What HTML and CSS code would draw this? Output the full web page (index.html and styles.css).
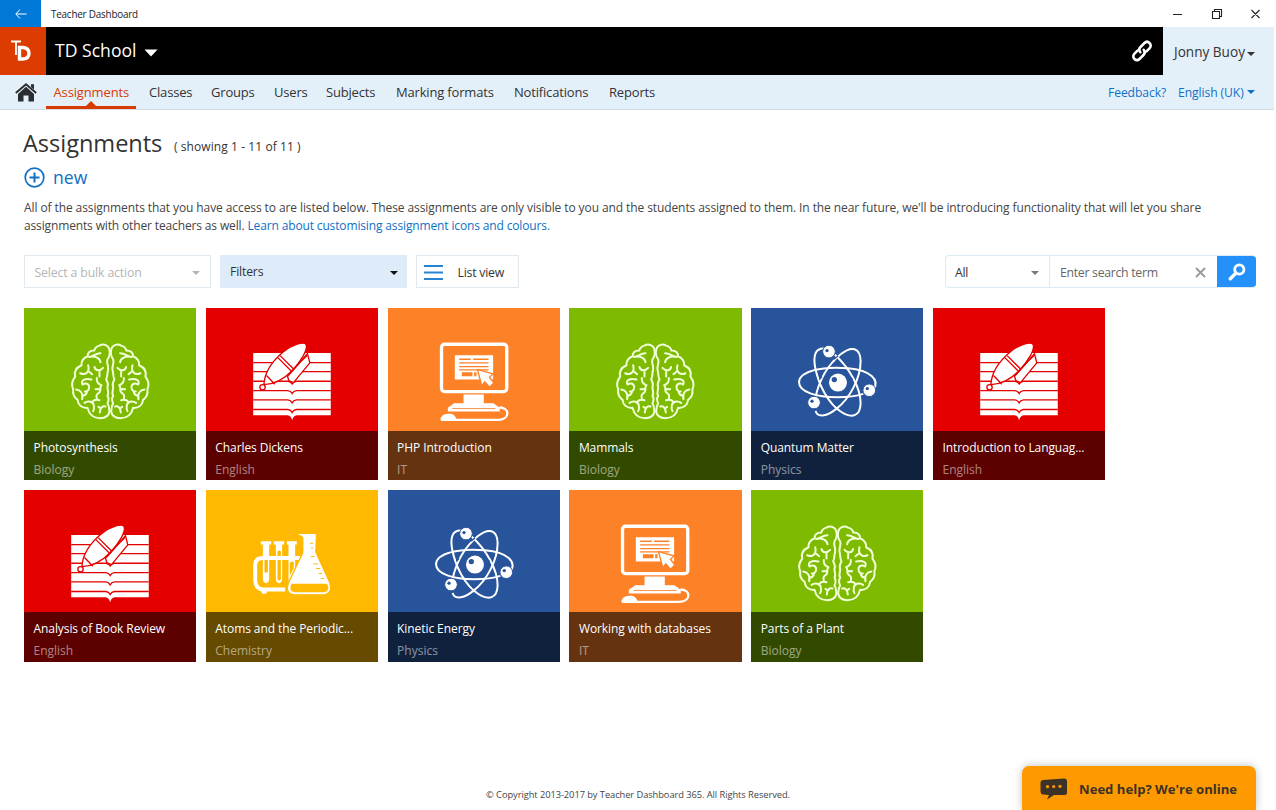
FILE: index.html
```html
<!DOCTYPE html>
<html lang="en">
<head>
<meta charset="utf-8">
<title>Teacher Dashboard</title>
<link rel="stylesheet" href="styles.css">
</head>
<body>
<svg class="defs" width="0" height="0">
  <symbol id="brain" viewBox="12 24 516 368">
    <g id="half" fill="none" stroke="#f1ffd8" stroke-width="6" stroke-linecap="round" stroke-linejoin="round">
      <path d="M268 150C266 136 250 130 238 137C228 139 224 145 222 152C208 152 201 160 203 169C190 173 182 185 184 196C168 203 161 215 165 230C156 242 153 256 159 268C157 283 163 294 172 300C174 316 186 325 202 324C207 345 222 355 240 355C256 355 266 347 268 335C266 325 268 318 262 311C266 302 268 296 262 288C268 278 261 270 262 262C266 252 262 246 258 238C264 228 260 220 264 210C266 195 258 190 262 178C268 170 270 160 268 150Z"/>
      <path d="M241 160C226 160 218 170 207 171C226 167 240 176 241 187M180 220C196 227 209 217 204 196M206 215L216 223M223 201C226 214 240 214 249 204M238 213L238 230M187 254C180 242 194 234 214 239M187 254C196 247 207 252 207 262C206 272 200 275 194 275M168 269C180 270 190 280 186 298M187 287C193 287 198 283 200 278M230 234C228 246 234 252 244 256C235 264 247 272 235 280C228 284 228 290 230 296M226 268L238 267M193 309C205 300 220 306 221 317C222 324 222 330 219 334M216 307C220 300 230 299 238 301M256 320C248 317 240 323 239 338M242 326L235 321"/>
    </g>
    <use href="#half" transform="translate(541 0) scale(-1 1)"/>
  </symbol>
  <symbol id="book" viewBox="12 23 516 368">
    <path fill="#fff" d="M153 158H386V345H284Q273 346 270 360Q267 346 256 345H153Z"/>
    <path fill="none" stroke="#e50000" stroke-width="4" d="M153 187H386M153 214H386M153 243H257Q266 244 270 251Q274 244 283 243H386M153 271H257Q266 272 270 280Q274 272 283 271H386M153 299H257Q266 300 270 308Q274 300 283 299H386M153 328H257Q266 329 270 337Q274 329 283 328H386"/>
    <g fill="#fff" stroke="#e50000" stroke-width="4" stroke-linejoin="round">
      <path d="M316 160L323 188L274 247L260 241L256 228Z"/>
      <path d="M185 253C187 220 207 185 243 155C270 132 306 122 312 133C318 148 296 184 269 212C246 236 216 252 185 253Z"/>
      <path d="M193 226L218 252M227 172L268 213M234 166L275 207" fill="none"/>
      <path d="M315 166L296 184L260 224" fill="none"/>
      <circle cx="181" cy="261" r="8"/>
    </g>
  </symbol>
  <symbol id="computer" viewBox="12 23 516 368">
    <rect x="172" y="132" width="196" height="142" rx="9" fill="none" stroke="#fff" stroke-width="10"/>
    <path fill="#fff" d="M212 165H327V238H212ZM238 283H299V313H238Z"/>
    <path stroke="#fd8127" stroke-width="4" d="M225 177H260M267 177H313M225 188H313M225 199H313M225 209H313"/>
    <path fill="#fd8127" d="M233 216H265V228H233ZM270 216H277V228H270Z"/>
    <path fill="#fff" stroke="#fd8127" stroke-width="4" d="M280 208L327 221L316 231L329 248L316 261L302 245L293 257Z"/>
    <path fill="#fff" d="M210 309H328L347 323V334H191V323ZM168 359Q171 342 190 341H200Q212 343 218 359Z"/>
    <path fill="none" stroke="#fff" stroke-width="7" d="M170 359H344C378 356 378 323 346 322"/>
    <path stroke="#fd8127" stroke-width="2.5" d="M205 325H334"/>
  </symbol>
  <symbol id="atom" viewBox="9.5 24 516 368">
    <g fill="none" stroke="#fff" stroke-width="6">
      <path d="M378 267C394 241 370 211 300 205C220 198 153 215 153 247C153 276 205 292 268 292C300 292 325 289 346 282"/>
      <path d="M229 146C200 144 195 170 202 205C212 254 239 309 278 335C311 357 337 350 338 310C338 266 306 204 258 162"/>
      <path d="M203 333C206 351 231 354 265 327C306 296 338 234 338 183C337 142 310 137 278 163C242 193 214 238 202 294"/>
    </g>
    <g stroke="#28549c" stroke-width="4" fill="none"><path d="M258 178L270 168M306 232L314 239M214 238L222 230M257 309L265 318M302 195L318 201"/></g>
    <g fill="#fff" stroke="#28549c" stroke-width="3"><circle cx="243" cy="155" r="19"/><circle cx="364" cy="271" r="19"/><circle cx="198" cy="308" r="19"/></g>
    <circle cx="270" cy="248" r="27" fill="#fff"/>
    <g fill="#28549c"><circle cx="259" cy="239" r="8"/><circle cx="237" cy="152" r="5"/><circle cx="358" cy="266" r="5"/><circle cx="192" cy="304" r="5"/></g>
  </symbol>
  <symbol id="flask" viewBox="12 14 516 368">
    <path fill="#fff" d="M176 168H207V178H201V280Q200 294 192 294Q183 294 182 280V178H176ZM215 168H246V178H240V280Q239 294 231 294Q222 294 221 280V178H215ZM254 168H284V178H279V250L259 290V178H254Z"/>
    <path fill="#ffb900" d="M187 224H197V262H187ZM226 198Q231 194 236 198V282Q231 290 226 282ZM263 232L275 228V248L263 270Z"/>
    <path fill="none" stroke="#fff" stroke-width="12" d="M296 218H180Q160 219 159 238V285Q160 311 183 313H249"/>
    <path fill="#fff" d="M176 314H196L192 326H180Z"/>
    <path fill="#fff" stroke="#ffb900" stroke-width="4" d="M285 144H343V155L341 200L383 292Q393 322 368 329H274Q249 324 258 295L302 202V158Q300 152 290 151Z"/>
    <path fill="#ffb900" d="M268 296H375Q386 317 367 321H277Q258 319 268 296Z"/>
    <path stroke="#ffb900" stroke-width="3" d="M323 174H333M327 189H333M326 214H337M334 236H347M342 250H354M350 265H360M356 280H366"/>
  </symbol>
</svg>

<header class="window-bar">
  <div class="back"><svg width="12" height="10" viewBox="0 0 12 10"><path d="M5 .5L.8 5L5 9.500M1 5H11.500" fill="none" stroke="#fff"/></svg></div>
  <span class="window-title">Teacher Dashboard</span>
  <svg class="window-controls" width="84" height="12" viewBox="0 0 84 12"><path d="M0 6.500H9M39.500 3.500H46.500V10.500H39.500ZM41.500 3V1.500H48.500V8.500H47M78.500 2L86.500 10M86.500 2L78.500 10" fill="none" stroke="#222" stroke-width="1.100"/></svg>
</header>
<div class="school-bar">
  <div class="logo"><svg width="46" height="48"><path d="M11 14.500H21M16 14V28" fill="none" stroke="#fff" stroke-width="1.800"/><path d="M19.500 20.500H23Q29 21 29 26.200Q29 31.500 23 32H19.500Z" fill="none" stroke="#fff" stroke-width="3.400"/></svg></div>
  <span class="school">TD School</span>
  <svg class="school-caret" width="14" height="8"><path d="M.5 .5H13.500L7 7.500Z" fill="#fff"/></svg>
  <svg class="link" width="22" height="22" viewBox="0 0 22 22"><g fill="none" stroke="#fff" stroke-width="2.600" stroke-linecap="round"><path d="M9.300 12.200C7.500 10 8 8.500 9.500 7L13.500 3C15 1.500 17 1.500 18.500 3C20.200 4.700 20 6.800 18.500 8.300L15.500 11.300"/><path d="M12.700 9.800C14.500 12 14 13.500 12.500 15L8.500 19C7 20.500 5 20.500 3.500 19C1.800 17.300 2 15.200 3.500 13.700L6.500 10.700"/></g></svg>
  <div class="user"><span>Jonny Buoy</span><i class="caret dark"></i></div>
</div>
<nav class="nav">
  <svg class="home" width="22" height="19" viewBox="0 0 22 19"><path d="M11 3.800L19 11V18.500H13.500V12.500H8.500V18.500H3V11Z" fill="#2b2d31"/><path d="M.8 10L11 1.300L21.200 10" fill="none" stroke="#2b2d31" stroke-width="1.900"/><path d="M16 1.300H19V6.500L16 4Z" fill="#2b2d31"/></svg>
  <a class="active">Assignments</a><a class="w-classes">Classes</a><a class="w-groups">Groups</a><a class="w-users">Users</a><a class="w-subjects">Subjects</a><a class="w-marking">Marking formats</a><a class="w-notes">Notifications</a><a>Reports</a>
  <span class="feedback">Feedback?</span><span class="language">English (UK)</span><i class="caret blue"></i>
</nav>
<main>
  <div class="heading"><h1>Assignments</h1><span>( showing 1 - 11 of 11 )</span></div>
  <div class="new"><svg width="21" height="21" viewBox="0 0 21 21"><circle cx="10.500" cy="10.500" r="9.300" fill="none" stroke="#0f70c4" stroke-width="1.700"/><path d="M10.500 5.500V15.500M5.500 10.500H15.500" stroke="#0f70c4" stroke-width="2"/></svg><span>new</span></div>
  <p class="intro"><span class="line-one">All of the assignments that you have access to are listed below. These assignments are only visible to you and the students assigned to them. In the near future, we'll be introducing functionality that will let you share</span><br><span class="line-two">assignments with other teachers as well. <a>Learn about customising assignment icons and colours.</a></span></p>
  <div class="toolbar">
    <div class="bulk"><span>Select a bulk action</span><i class="caret pale"></i></div>
    <div class="filters"><span>Filters</span><i class="caret black"></i></div>
    <div class="list-view"><svg width="19" height="15"><path d="M0 1H19M0 7.500H19M0 14H19" stroke="#2882d4" stroke-width="2"/></svg><span>List view</span></div>
    <div class="search">
      <div class="scope"><span>All</span><i class="caret grey"></i></div>
      <div class="term"><span>Enter search term</span><svg width="11" height="11"><path d="M1 1L10 10M10 1L1 10" stroke="#999" stroke-width="1.800"/></svg></div>
      <div class="go"><svg width="18" height="18" viewBox="0 0 18 18"><circle cx="11.300" cy="6.500" r="4.600" fill="none" stroke="#fff" stroke-width="2.800"/><path d="M8 10L2.300 15.700" stroke="#fff" stroke-width="3.400" stroke-linecap="round"/></svg></div>
    </div>
  </div>
  <section class="tiles">
    <article class="tile green"><svg><use href="#brain"/></svg><div><b>Photosynthesis</b><small>Biology</small></div></article>
    <article class="tile red"><svg><use href="#book"/></svg><div><b>Charles Dickens</b><small>English</small></div></article>
    <article class="tile orange"><svg><use href="#computer"/></svg><div><b>PHP Introduction</b><small>IT</small></div></article>
    <article class="tile green"><svg><use href="#brain"/></svg><div><b>Mammals</b><small>Biology</small></div></article>
    <article class="tile navy"><svg><use href="#atom"/></svg><div><b>Quantum Matter</b><small>Physics</small></div></article>
    <article class="tile red"><svg><use href="#book"/></svg><div><b>Introduction to Languag...</b><small>English</small></div></article>
    <article class="tile red"><svg><use href="#book"/></svg><div><b>Analysis of Book Review</b><small>English</small></div></article>
    <article class="tile yellow"><svg><use href="#flask"/></svg><div><b>Atoms and the Periodic...</b><small>Chemistry</small></div></article>
    <article class="tile navy"><svg><use href="#atom"/></svg><div><b>Kinetic Energy</b><small>Physics</small></div></article>
    <article class="tile orange"><svg><use href="#computer"/></svg><div><b>Working with databases</b><small>IT</small></div></article>
    <article class="tile green"><svg><use href="#brain"/></svg><div><b>Parts of a Plant</b><small>Biology</small></div></article>
  </section>
</main>
<footer>© Copyright 2013-2017 by Teacher Dashboard 365. All Rights Reserved.</footer>
<div class="help"><svg width="28" height="22" viewBox="0 0 28 22"><path d="M3 2L24 .5Q27 .5 27 3V14.500Q27 17 24.500 17H14L7 21.500L9 17L3 16.500Q.5 16 .5 13.500V4.500Q.5 2.200 3 2Z" fill="#3d3227"/><g fill="#ff9900"><circle cx="7.500" cy="8.700" r="1.600"/><circle cx="13.700" cy="8.500" r="1.600"/><circle cx="20" cy="8.300" r="1.600"/></g></svg><span>Need help? We're online</span></div>
</body>
</html>
```
FILE: styles.css
```css
* { box-sizing: border-box; }
html, body { margin: 0; height: 810px; overflow: hidden; }
body { width: 1274px; display: flex; flex-direction: column; background: #fff; color: #333; font: 12.3px/18px "Open Sans", "Noto Sans", sans-serif; }
span, a, b, small, h1 { white-space: nowrap; }
svg { display: block; flex: none; }
.defs { position: absolute; }

.window-bar { height: 27px; flex: none; display: flex; align-items: center; }
.back { width: 41px; height: 27px; background: #0078d7; display: flex; align-items: center; justify-content: center; }
.window-title { margin-left: 10px; padding-top: 1px; font-size: 9.900px; letter-spacing: -.2px; color: #222; }
.window-controls { margin-left: auto; margin-right: 17px; overflow: visible; }

.school-bar { height: 48px; flex: none; display: flex; align-items: center; background: #000; }
.logo { width: 46px; height: 48px; background: #dc3c00; }
.school { margin: -2px 0 0 9px; color: #fff; font-size: 17.600px; }
.school-caret { margin-left: 7px; margin-top: 4px; }
.link { margin-left: auto; margin-right: 10px; }
.user { width: 111px; height: 48px; display: flex; align-items: center; padding: 2px 0 0 11px; background: #e3f0fa; font-size: 13.600px; }
.caret { width: 0; height: 0; border: 4px solid transparent; border-bottom: 0; border-top-color: currentColor; }
.user .caret { margin-left: 2px; margin-top: 3px; }

.nav { height: 35px; flex: none; display: flex; align-items: center; padding-left: 15px; background: #e3f0fa; border-bottom: 1px solid #d3dce3; font-size: 13px; letter-spacing: -.18px; }
.nav a { height: 34px; line-height: 34px; }
.nav .active { position: relative; width: 90px; margin: 0 13px 0 9px; padding-left: 7.500px; letter-spacing: -.14px; color: #d83b01; border-bottom: 3px solid #d83b01; }
.nav .active::after { content: ""; position: absolute; left: 40px; bottom: 0; border: 5px solid transparent; border-top: 0; border-bottom-color: #d83b01; }
.w-classes { width: 62px; }
.w-groups { width: 63px; }
.w-users { width: 52px; }
.w-subjects { width: 70px; }
.w-marking { width: 118px; }
.w-notes { width: 95px; }
.feedback { margin-left: auto; width: 70px; }
.feedback, .language { font-size: 12.100px; letter-spacing: -.07px; color: #0f70c4; }
.feedback, .language { padding-top: 1px; }
.language { width: 70px; }
.caret.blue { color: #0f70c4; margin-right: 19px; margin-left: -1px; }

main { padding-left: 24px; flex: 1; }
.heading { display: flex; align-items: baseline; height: 53px; padding-top: 17px; }
h1 { margin: 0 12px 0 -1px; width: 139px; font-size: 23.600px; line-height: 32px; font-weight: 400; letter-spacing: -.05px; }
.heading span { font-size: 12px; letter-spacing: .08px; transform: translateY(-1px); }
.new { display: flex; align-items: center; gap: 8px; height: 28px; color: #0f70c4; font-size: 17.600px; }
.intro { margin: 8px 0 20px; line-height: 18px; color: #444; font-size: 12px; }
.line-one { letter-spacing: -.094px; }
.line-two { letter-spacing: -.14px; }
.intro a { color: #0f70c4; }
.toolbar { display: flex; width: 1232px; height: 33px; }
.toolbar > div, .search > div { display: flex; align-items: center; justify-content: space-between; }
.toolbar .bulk { width: 187px; border: 1px solid #e3eaef; padding: 2px 10px 0 9.500px; color: #b5b5b5; letter-spacing: -.15px; }
.toolbar .filters { width: 187px; margin-left: 9px; background: #deecf9; padding: 2px 9px 0 10px; letter-spacing: -.2px; }
.filters span { margin-top: -2px; }
.black { color: #111; }
.toolbar .list-view { width: 103px; margin-left: 9px; border: 1px solid #dfe9ef; padding: 2px 14px 0 7px; letter-spacing: -.25px; }
.search { width: 311px; margin-left: auto; border: 1px solid #dceaf1; border-right: 0; border-radius: 4px; overflow: hidden; letter-spacing: -.3px; }
.toolbar .search > div { height: 33px; }
.toolbar .search > .scope { width: 104px; padding: 2px 10px 0 9px; border-right: 1px solid #dceaf1; }
.grey { color: #777; }
.toolbar .search > .term { width: 167px; padding: 2px 11px 0 10px; color: #666; }
.toolbar .go { width: 39px; background: #2491fb; justify-content: center; }

.tiles { display: grid; grid-template-columns: repeat(6, 172.300px); gap: 9.500px; margin-top: 20px; }
.tile { height: 172.300px; display: flex; flex-direction: column; }
.tile > svg { width: 172.300px; height: 122.500px; }
.tile div { flex: 1; padding: 8px 9.500px 0; background: rgba(0, 0, 0, .6); }
.tile b { display: block; font-weight: 400; color: #fff; line-height: 18px; font-size: 12px; letter-spacing: -.08px; }
.tile small { display: block; color: #fff; opacity: .5; line-height: 18px; margin-top: 4px; font-size: 12px; }
.green { background: #7dba00; }
.red { background: #e50000; }
.orange { background: #fd8127; }
.navy { background: #28549c; }
.yellow { background: #ffb900; }

footer { height: 24px; flex: none; text-align: center; font-size: 9.300px; letter-spacing: -.06px; line-height: 17px; padding-left: 2px; color: #444; }
.help { position: absolute; left: 1022px; top: 766px; width: 234px; height: 44px; display: flex; align-items: center; gap: 11px; padding-left: 18px; padding-top: 2px; background: #ff9900; border-radius: 7px 7px 0 0; box-shadow: 0 0 8px rgba(0, 0, 0, .25); color: #3d3227; font-weight: 700; font-size: 13.100px; }
```
